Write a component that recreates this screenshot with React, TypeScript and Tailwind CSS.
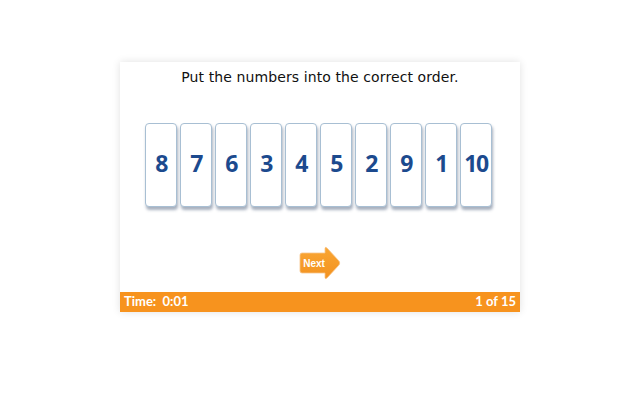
const numbers = [8, 7, 6, 3, 4, 5, 2, 9, 1, 10]

function NextArrow() {
  return (
    <button className="relative w-[42px] h-[34px] cursor-pointer">
      <svg width="42" height="34" viewBox="0 0 42 34" className="absolute inset-0">
        <defs>
          <linearGradient id="nextFill" x1="0" y1="0" x2="0" y2="1">
            <stop offset="0" stopColor="#f9a634" />
            <stop offset="1" stopColor="#f39220" />
          </linearGradient>
        </defs>
        <path
          d="M3 7 H26 V2.5 Q26 0.5 28 2 L40 15 Q41.5 17 40 19 L28 32 Q26 33.5 26 31.5 V27 H3 Q1 27 1 25 V9 Q1 7 3 7 Z"
          fill="url(#nextFill)"
          stroke="#f7c58a"
          strokeWidth="0.8"
        />
      </svg>
      <span className="relative block pr-[11px] pt-[1px] text-[10px] leading-none font-bold text-white font-['Liberation_Sans',sans-serif]">
        Next
      </span>
    </button>
  )
}

export default function App() {
  return (
    <div className="w-[640px] h-[400px] bg-white flex justify-center pt-[62px]">
      <div className="w-[400px] h-[250px] bg-white flex flex-col shadow-[0_0_8px_rgba(0,0,0,0.12)]">
        <p className="text-center text-[14px] tracking-[0.1px] leading-none pt-[8px] text-[#111] font-['DejaVu_Sans',sans-serif]">
          Put the numbers into the correct order.
        </p>

        <div className="flex justify-center gap-[3px] mt-[39px] pr-[3px]">
          {numbers.map((n) => (
            <div
              key={n}
              className="w-[32px] h-[84px] rounded-[4px] border border-[#a8bfd3] bg-white flex items-center justify-center pb-[3px] shadow-[1px_3px_3px_rgba(60,80,110,0.45)]"
            >
              <span className="text-[23px] font-bold text-[#1c4a8e] tracking-[-1.5px] font-['Open_Sans',sans-serif]">
                {n}
              </span>
            </div>
          ))}
        </div>

        <div className="flex justify-center mt-[39px] pr-[1px]">
          <NextArrow />
        </div>

        <div className="mt-auto h-[20px] bg-[#f7931e] flex items-center justify-between px-[4px] text-white font-bold text-[13px] font-['Lato',sans-serif]">
          <span>Time:&nbsp; 0:01</span>
          <span>1 of 15</span>
        </div>
      </div>
    </div>
  )
}
